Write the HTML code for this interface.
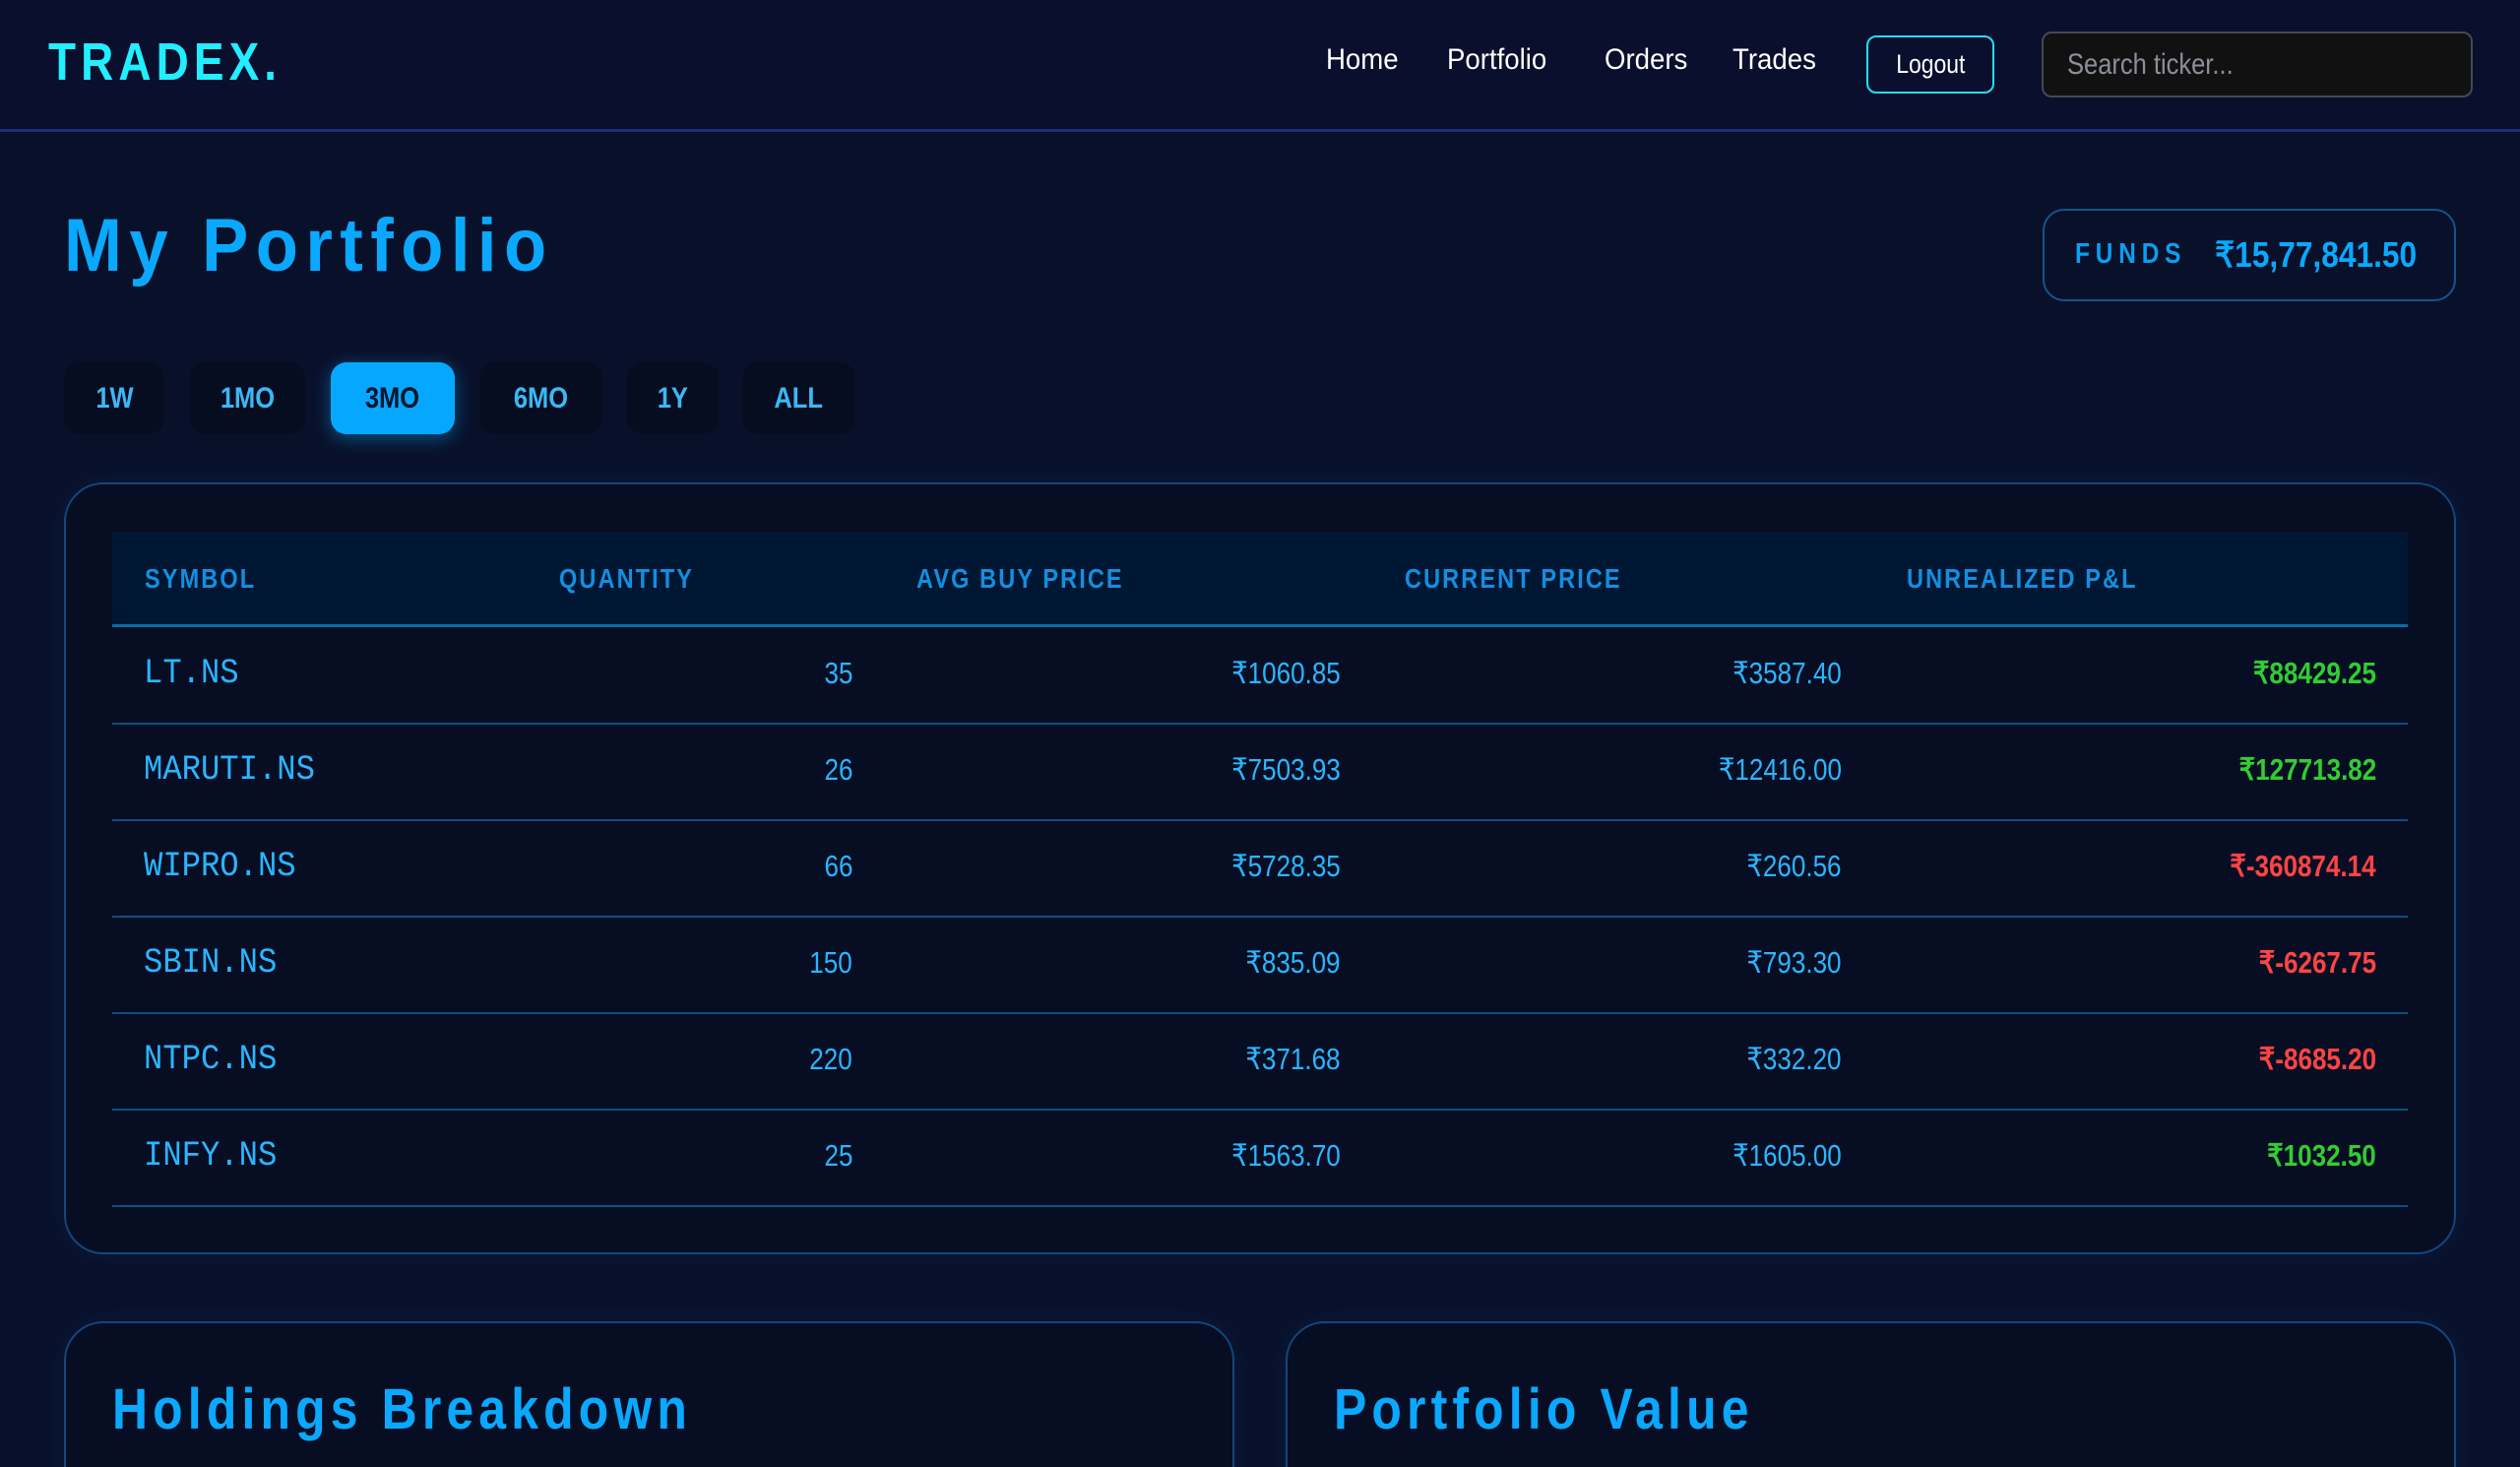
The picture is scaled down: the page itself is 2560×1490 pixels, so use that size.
<!DOCTYPE html>
<html><head><meta charset="utf-8"><style>
*{margin:0;padding:0;box-sizing:border-box}
html{width:2560px;height:1490px;overflow:hidden}
body{width:2560px;height:1490px;overflow:hidden;background:#09112a;font-family:"Liberation Sans",sans-serif;position:relative}
.a{position:absolute;white-space:nowrap}
.c{transform:scaleX(.84);transform-origin:left center}
.cr{transform:scaleX(.84);transform-origin:right center}
nav{position:absolute;left:0;top:0;width:2560px;height:134px;background:#0a0f2e;border-bottom:3px solid #1a2d78}
.logo{left:49px;top:32px;font-size:54px;font-weight:bold;color:#22eeff;letter-spacing:6px;transform:scaleX(.85);transform-origin:left}
.nl{top:44px;font-size:30px;color:#fff;transform:scaleX(.92);transform-origin:left}
.logout{left:1896px;top:36px;width:130px;height:59px;border:2px solid #22e0f0;border-radius:10px;color:#fff;font-size:27px;text-align:center;line-height:55px}
.search{left:2074px;top:32px;width:438px;height:67px;background:#111;border:2px solid #444a55;border-radius:10px;color:#8a8f98;font-size:30px;line-height:63px;padding-left:24px}
h1{position:absolute;left:65px;top:206px;font-size:76px;color:#0aa8ff;letter-spacing:8px;font-weight:bold;white-space:nowrap;transform:scaleX(.93);transform-origin:left}
.funds{left:2075px;top:212px;width:420px;height:94px;border:2px solid #15548a;border-radius:22px}
.btn{top:368px;height:73px;background:#070d20;border-radius:16px;color:#3cb8f5;font-size:30px;font-weight:bold;text-align:center;line-height:73px}
.btn span{display:inline-block;transform:scaleX(.85)}
.card{position:absolute;border:2px solid #15467a;border-radius:40px;background:#070e24;box-shadow:0 0 30px rgba(10,100,200,.12)}
.th{top:540px;left:114px;width:2332px;height:97px;background:#001733;border-bottom:3px solid #0e6aa8}
.h{top:572px;font-size:28px;font-weight:bold;color:#128fe0;letter-spacing:2.5px}
.row{left:114px;width:2332px;height:2px;background:#0e4f80}
.s{left:146px;font-family:"Liberation Mono",monospace;font-size:35px;color:#2bb5ff;transform:scaleX(.92);transform-origin:left}
.n{font-size:31px;color:#2bb5ff;text-align:right}
.g{color:#33cc33;font-weight:bold}.r{color:#ff4444;font-weight:bold}
.ct{font-size:58px;font-weight:bold;color:#0aa8ff;letter-spacing:6px;transform:scaleX(.86);transform-origin:left}
</style></head><body>
<nav></nav>
<div class="a logo">TRADEX.</div>
<div class="a nl" style="left:1347px">Home</div>
<div class="a nl" style="left:1470px">Portfolio</div>
<div class="a nl" style="left:1630px">Orders</div>
<div class="a nl" style="left:1760px">Trades</div>
<div class="a logout"><span style="display:inline-block;transform:scaleX(.85)">Logout</span></div>
<div class="a search"><span style="display:inline-block;transform:scaleX(.85);transform-origin:left">Search ticker...</span></div>
<h1>My Portfolio</h1>
<div class="a funds"></div>
<div class="a c" style="left:2108px;top:242px;font-size:29px;font-weight:bold;color:#0a9ff0;letter-spacing:7px">FUNDS</div>
<div class="a" style="left:2250px;top:238px;font-size:36px;font-weight:bold;color:#0aa8ff;transform:scaleX(.88);transform-origin:left">₹15,77,841.50</div>
<div class="a btn" style="left:65px;width:102px"><span>1W</span></div>
<div class="a btn" style="left:193px;width:117px"><span>1MO</span></div>
<div class="a btn" style="left:336px;width:126px;background:#06a8ff;color:#06152e;box-shadow:0 4px 18px rgba(6,168,255,.45)"><span>3MO</span></div>
<div class="a btn" style="left:487px;width:125px"><span>6MO</span></div>
<div class="a btn" style="left:637px;width:93px"><span>1Y</span></div>
<div class="a btn" style="left:754px;width:115px"><span>ALL</span></div>
<div class="card" style="left:65px;top:490px;width:2430px;height:784px"></div>
<div class="a th"></div>
<div class="a h c" style="left:147px">SYMBOL</div>
<div class="a h c" style="left:568px">QUANTITY</div>
<div class="a h c" style="left:931px">AVG BUY PRICE</div>
<div class="a h c" style="left:1427px">CURRENT PRICE</div>
<div class="a h c" style="left:1937px">UNREALIZED P&amp;L</div>

<div class="a row" style="top:734px"></div>
<div class="a row" style="top:832px"></div>
<div class="a row" style="top:930px"></div>
<div class="a row" style="top:1028px"></div>
<div class="a row" style="top:1126px"></div>
<div class="a row" style="top:1224px"></div>

<div class="a s" style="top:664px">LT.NS</div>
<div class="a n cr" style="top:666px;right:1694px">35</div>
<div class="a n cr" style="top:666px;right:1198px">₹1060.85</div>
<div class="a n cr" style="top:666px;right:689px">₹3587.40</div>
<div class="a n g cr" style="top:666px;right:146px">₹88429.25</div>

<div class="a s" style="top:762px">MARUTI.NS</div>
<div class="a n cr" style="top:764px;right:1694px">26</div>
<div class="a n cr" style="top:764px;right:1198px">₹7503.93</div>
<div class="a n cr" style="top:764px;right:689px">₹12416.00</div>
<div class="a n g cr" style="top:764px;right:146px">₹127713.82</div>

<div class="a s" style="top:860px">WIPRO.NS</div>
<div class="a n cr" style="top:862px;right:1694px">66</div>
<div class="a n cr" style="top:862px;right:1198px">₹5728.35</div>
<div class="a n cr" style="top:862px;right:689px">₹260.56</div>
<div class="a n r cr" style="top:862px;right:146px">₹-360874.14</div>

<div class="a s" style="top:958px">SBIN.NS</div>
<div class="a n cr" style="top:960px;right:1694px">150</div>
<div class="a n cr" style="top:960px;right:1198px">₹835.09</div>
<div class="a n cr" style="top:960px;right:689px">₹793.30</div>
<div class="a n r cr" style="top:960px;right:146px">₹-6267.75</div>

<div class="a s" style="top:1056px">NTPC.NS</div>
<div class="a n cr" style="top:1058px;right:1694px">220</div>
<div class="a n cr" style="top:1058px;right:1198px">₹371.68</div>
<div class="a n cr" style="top:1058px;right:689px">₹332.20</div>
<div class="a n r cr" style="top:1058px;right:146px">₹-8685.20</div>

<div class="a s" style="top:1154px">INFY.NS</div>
<div class="a n cr" style="top:1156px;right:1694px">25</div>
<div class="a n cr" style="top:1156px;right:1198px">₹1563.70</div>
<div class="a n cr" style="top:1156px;right:689px">₹1605.00</div>
<div class="a n g cr" style="top:1156px;right:146px">₹1032.50</div>

<div class="card" style="left:65px;top:1342px;width:1189px;height:200px"></div>
<div class="card" style="left:1306px;top:1342px;width:1189px;height:200px"></div>
<div class="a ct" style="left:114px;top:1398px">Holdings Breakdown</div>
<div class="a ct" style="left:1355px;top:1398px">Portfolio Value</div>
</body></html>
